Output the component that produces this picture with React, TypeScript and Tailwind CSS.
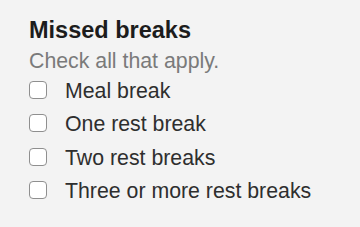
export default function App() {
  const options = ['Meal break', 'One rest break', 'Two rest breaks', 'Three or more rest breaks'];

  return (
    <div className="w-[360px] h-[227px] bg-[#f3f3f3] pl-[29px] pt-[16px] font-['Liberation_Sans',Arial,sans-serif]">
      <h2 className="text-[23.5px] leading-[28px] font-bold text-[#1c1c1c]">Missed breaks</h2>
      <p className="mt-[3px] text-[21.3px] leading-[28px] text-[#7a7a7a]">Check all that apply.</p>
      <div className="flex flex-col">
        {options.map(label => (
          <label key={label} className="flex items-start gap-[18px] h-[33.4px] text-[21.3px] leading-[33.4px] text-[#2e2e2e]">
            <span className="mt-[6px] w-[18px] h-[18px] shrink-0 rounded-[4px] border border-[#8f8f8f] bg-white" />
            <span>{label}</span>
          </label>
        ))}
      </div>
    </div>
  );
}
